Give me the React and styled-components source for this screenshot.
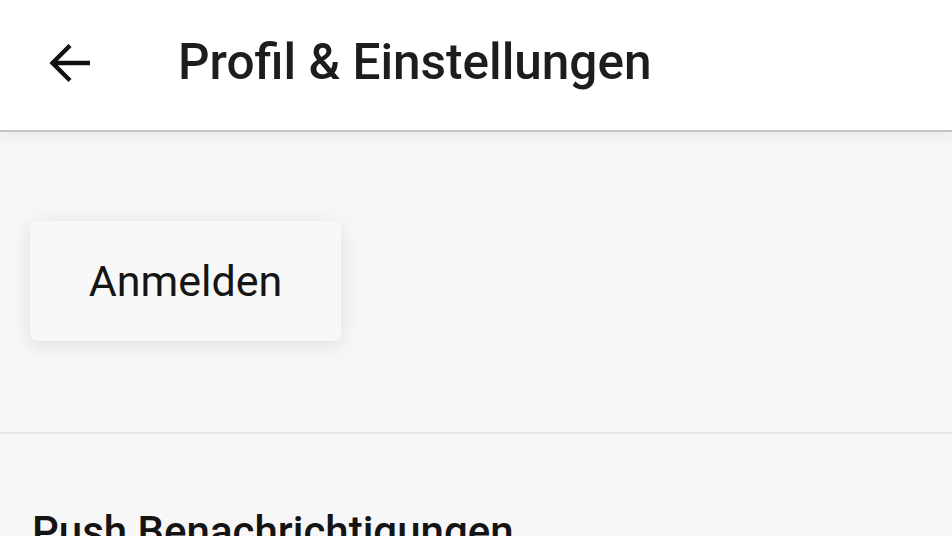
import React from "react";
import styled, { createGlobalStyle } from "styled-components";

const GlobalStyle = createGlobalStyle`
  html, body {
    margin: 0;
    padding: 0;
    background: #f7f7f7;
    font-family: Roboto, "Noto Sans", sans-serif;
    color: #1c1c1c;
    overflow: hidden;
  }
`;

const Page = styled.div`
  width: 952px;
  height: 536px;
  overflow: hidden;
  display: flex;
  flex-direction: column;
  background: #f7f7f7;
`;

const AppBar = styled.header`
  height: 130px;
  flex-shrink: 0;
  display: flex;
  align-items: center;
  background: #ffffff;
  border-bottom: 2px solid #c4c4c4;
  box-shadow: 0 3px 16px rgba(0, 0, 0, 0.08);
  position: relative;
  z-index: 1;
`;

const BackButton = styled.button`
  width: 60px;
  height: 60px;
  margin-left: 40px;
  margin-top: -5px;
  padding: 0;
  border: none;
  background: transparent;
  display: flex;
  align-items: center;
  justify-content: center;
`;

const Title = styled.h1`
  margin: 0 0 0 78px;
  margin-top: -6px;
  font-size: 49.5px;
  font-weight: 500;
  color: #1d1d1d;
  letter-spacing: 0;
`;

const Section = styled.section`
  display: flex;
  align-items: center;
  height: ${props => props.height}px;
  flex-shrink: 0;
  padding: 0 30px;
  border-bottom: ${props => (props.divider ? "2px solid #e6e6e6" : "none")};
`;

const LoginCard = styled.button`
  width: 311px;
  height: 120px;
  margin-top: -2px;
  border: none;
  border-radius: 7px;
  background: #f8f8f8;
  box-shadow: 0 4px 20px rgba(0, 0, 0, 0.1);
  font-family: Roboto, sans-serif;
  font-size: 43px;
  font-weight: 400;
  color: #151515;
  display: flex;
  align-items: center;
  justify-content: center;
`;

const SectionTitle = styled.h2`
  margin: 0;
  padding: 73px 32px 0;
  font-size: 42px;
  font-weight: 500;
  color: #141414;
  line-height: 1.2;
`;

const ArrowBack = () => (
  <svg width="60" height="60" viewBox="0 0 24 24">
    <path
      d="M20 12H5.2M12 5 5 12l7 7"
      fill="none"
      stroke="#111"
      strokeWidth="1.75"
      strokeLinejoin="miter"
    />
  </svg>
);

export default function App() {
  return (
    <Page>
      <GlobalStyle />
      <AppBar>
        <BackButton aria-label="Zurück">
          <ArrowBack />
        </BackButton>
        <Title>Profil &amp; Einstellungen</Title>
      </AppBar>
      <Section height={300} divider>
        <LoginCard>Anmelden</LoginCard>
      </Section>
      <SectionTitle>Push Benachrichtigungen</SectionTitle>
    </Page>
  );
}
